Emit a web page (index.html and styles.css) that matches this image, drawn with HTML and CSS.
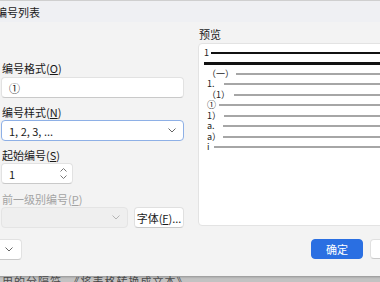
FILE: index.html
```html
<!DOCTYPE html>
<html lang="zh-CN">
<head>
    <meta charset="UTF-8">
    <title>编号列表</title>
    <link rel="stylesheet" href="styles.css">
</head>
<body>
    <div class="dialog">
        <div class="titlebar">编号列表</div>
        <div class="main">
            <div class="left-col">
                <div class="field-label first">编号格式(<u>O</u>)</div>
                <div class="input">①</div>

                <div class="field-label">编号样式(<u>N</u>)</div>
                <div class="input select focused">
                    <span>1, 2, 3, ...</span>
                    <svg class="chev" width="8" height="5" viewBox="0 0 8 5"><path d="M0.5 0.5 L4 4 L7.5 0.5" fill="none" stroke="#666" stroke-width="1"/></svg>
                </div>

                <div class="field-label">起始编号(<u>S</u>)</div>
                <div class="input spinner">
                    <span>1</span>
                    <div class="spin-arrows">
                        <svg width="7" height="4" viewBox="0 0 7 4"><path d="M0.5 3.5 L3.5 0.5 L6.5 3.5" fill="none" stroke="#777" stroke-width="1"/></svg>
                        <svg width="7" height="4" viewBox="0 0 7 4"><path d="M0.5 0.5 L3.5 3.5 L6.5 0.5" fill="none" stroke="#777" stroke-width="1"/></svg>
                    </div>
                </div>

                <div class="field-label disabled">前一级别编号(<u>P</u>)</div>
                <div class="row">
                    <div class="input select disabled-box">
                        <span></span>
                        <svg class="chev" width="8" height="5" viewBox="0 0 8 5"><path d="M0.5 0.5 L4 4 L7.5 0.5" fill="none" stroke="#b5b5b5" stroke-width="1"/></svg>
                    </div>
                    <div class="button">字体(<u>F</u>)...</div>
                </div>
            </div>

            <div class="right-col">
                <div class="field-label preview-label">预览</div>
                <div class="preview">
                    <div class="pv-row head">
                        <span class="pv-num w7">1</span>
                        <div class="pv-line black"></div>
                    </div>
                    <div class="pv-rule"></div>
                    <div class="pv-row">
                        <span class="pv-num w29">（一）</span>
                        <div class="pv-line"></div>
                    </div>
                    <div class="pv-row">
                        <span class="pv-num w17">1.</span>
                        <div class="pv-line"></div>
                    </div>
                    <div class="pv-row">
                        <span class="pv-num w27">（1）</span>
                        <div class="pv-line"></div>
                    </div>
                    <div class="pv-row">
                        <span class="pv-num w12">①</span>
                        <div class="pv-line"></div>
                    </div>
                    <div class="pv-row">
                        <span class="pv-num w17">1）</span>
                        <div class="pv-line"></div>
                    </div>
                    <div class="pv-row">
                        <span class="pv-num w16">a.</span>
                        <div class="pv-line"></div>
                    </div>
                    <div class="pv-row">
                        <span class="pv-num w16">a）</span>
                        <div class="pv-line"></div>
                    </div>
                    <div class="pv-row">
                        <span class="pv-num w7">i</span>
                        <div class="pv-line"></div>
                    </div>
                </div>
            </div>
        </div>

        <div class="footer">
            <div class="input select small-drop">
                <span></span>
                <svg class="chev" width="8" height="5" viewBox="0 0 8 5"><path d="M0.5 0.5 L4 4 L7.5 0.5" fill="none" stroke="#666" stroke-width="1"/></svg>
            </div>
            <div class="footer-buttons">
                <div class="button primary">确定</div>
                <div class="button wide">取消</div>
            </div>
        </div>
    </div>
    <div class="doc-line"><span>用的分隔符，《将表格转换成文本》</span></div>
</body>
</html>
```

FILE: styles.css
```css
body {
    font-family: "Noto Sans CJK SC", "Noto Sans", sans-serif;
    font-size: 11px;
    color: #1a1a1a;
    margin: 0;
    padding: 0;
    width: 380px;
    height: 282px;
    overflow: hidden;
    background-color: #c2c2c2;
}
.dialog {
    margin-left: -20px;
    width: 470px;
    height: 276px;
    background-color: #f3f3f3;
    border-top: 1px solid #cfcfcf;
    box-sizing: border-box;
    display: flex;
    flex-direction: column;
    box-shadow: 0 1px 2px rgba(0, 0, 0, 0.25);
}
.titlebar {
    height: 21px;
    padding-left: 16px;
    display: flex;
    align-items: center;
    background-color: #eff0f3;
    font-size: 11px;
}
.main {
    display: flex;
    gap: 14px;
    padding: 0 21px;
}
.left-col {
    width: 183px;
    display: flex;
    flex-direction: column;
}
.right-col {
    flex: 1;
    display: flex;
    flex-direction: column;
}
.field-label {
    line-height: 14px;
    margin-top: 7px;
    margin-bottom: 1px;
    padding-left: 1px;
}
.field-label.first {
    margin-top: 39px;
    margin-bottom: 2px;
}
.field-label.disabled {
    color: #a3a3a3;
    margin-top: 8px;
}
.preview-label {
    margin-top: 5px;
    margin-bottom: 2px;
}
u {
    text-decoration-thickness: 1px;
    text-underline-offset: 1px;
}
.input {
    height: 21px;
    box-sizing: border-box;
    background-color: #fff;
    border: 1px solid #e2e2e2;
    border-bottom-color: #c9c9c9;
    border-radius: 4px;
    padding: 0 7px;
    display: flex;
    align-items: center;
    justify-content: space-between;
}
.input.focused {
    border-color: #8eb0e6;
}
.spinner {
    width: 72px;
    padding-right: 5px;
}
.spin-arrows {
    display: flex;
    flex-direction: column;
    gap: 3px;
}
.row {
    display: flex;
    gap: 6px;
}
.disabled-box {
    width: 127px;
    background-color: #efefef;
    border-color: #e4e4e4;
}
.button {
    height: 21px;
    box-sizing: border-box;
    background-color: #fff;
    border: 1px solid #e0e0e0;
    border-bottom-color: #cacaca;
    border-radius: 4px;
    display: flex;
    align-items: center;
    justify-content: center;
    flex: 1;
}
.preview {
    height: 183px;
    box-sizing: border-box;
    background-color: #fff;
    border: 1px solid #e3e3e3;
    border-radius: 4px;
    padding-top: 4px;
}
.pv-row {
    height: 10.5px;
    display: flex;
    align-items: center;
    padding-left: 8px;
    font-size: 9px;
    color: #222;
}
.pv-row.head {
    height: 10px;
    padding-left: 5px;
}
.pv-num {
    flex-shrink: 0;
    line-height: 10px;
    white-space: nowrap;
}
.w7 { width: 7px; }
.w12 { width: 12px; }
.w16 { width: 16px; }
.w17 { width: 17px; }
.w27 { width: 27px; }
.w29 { width: 29px; }
.pv-line {
    flex: 1;
    height: 2px;
    background-color: #a6a6a6;
}
.pv-line.black {
    background-color: #111;
}
.pv-rule {
    height: 3px;
    background-color: #111;
    margin: 4px 0 3.5px 5px;
}
.footer {
    display: flex;
    justify-content: space-between;
    padding: 11px 28px 0 11px;
}
.small-drop {
    width: 31px;
    padding: 0 8px 0 7px;
    justify-content: flex-end;
    background-color: #fff;
}
.footer-buttons {
    display: flex;
    gap: 7px;
}
.footer-buttons .button {
    width: 52px;
    height: 20px;
    flex: none;
}
.button.primary {
    background-color: #2a6fe2;
    border-color: #2a6fe2;
    color: #fff;
}
.doc-line {
    height: 6px;
    overflow: hidden;
    padding-left: 2px;
    color: #4a4a4a;
    letter-spacing: 1px;
}
.doc-line span {
    display: block;
    line-height: 12px;
    margin-top: -1px;
}
```
